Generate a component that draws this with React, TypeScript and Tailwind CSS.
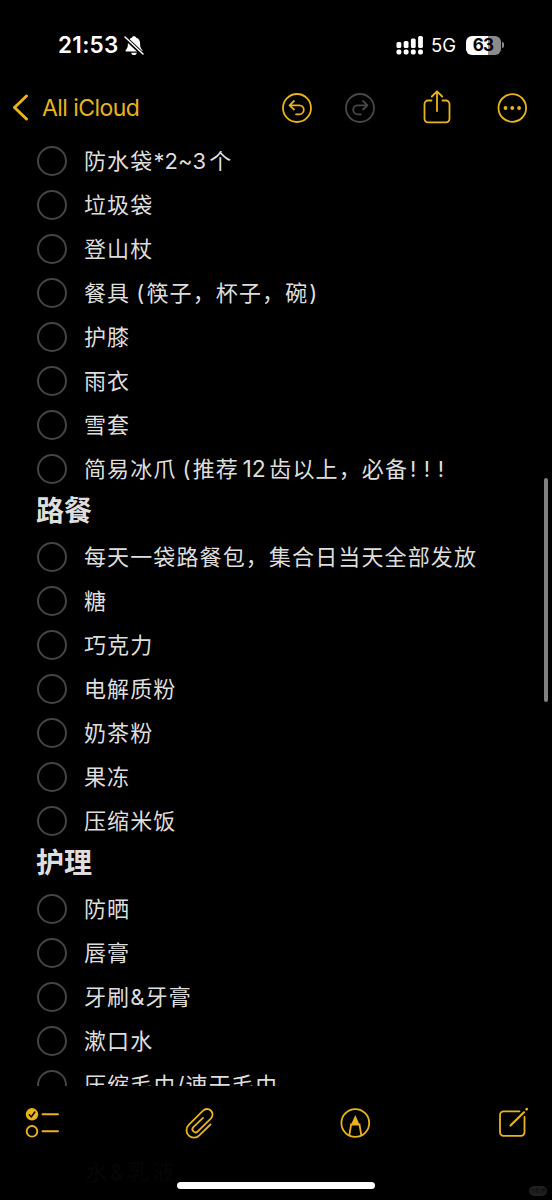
import type { ReactNode } from "react";

type Section = { title?: string; items: ReactNode[] };

const sections: Section[] = [
  {
    items: [
      <>
        防水袋<span className="tracking-[0.1px]">*2~3</span>
        <span className="ml-[3px]">个</span>
      </>,
      "垃圾袋",
      "登山杖",
      <>
        餐具<span className="mr-px ml-1.5">(</span>筷子，杯子，碗
        <span className="ml-px">)</span>
      </>,
      "护膝",
      "雨衣",
      "雪套",
      <>
        简易冰爪<span className="mr-px ml-1.5">(</span>推荐
        <span className="mx-[3.5px] text-[23px] tracking-normal">12</span>
        齿以上，必备<span className="ml-0.5 tracking-[7.5px]">!!!</span>
      </>,
    ],
  },
  {
    title: "路餐",
    items: [
      "每天一袋路餐包，集合日当天全部发放",
      "糖",
      "巧克力",
      "电解质粉",
      "奶茶粉",
      "果冻",
      "压缩米饭",
    ],
  },
  {
    title: "护理",
    items: ["防晒", "唇膏", "牙刷&牙膏", "漱口水", "压缩毛巾/速干毛巾"],
  },
];

function StatusBar() {
  return (
    <div className="flex h-[66px] items-start justify-between pt-[34px] pr-[48px] pl-[58px] text-white">
      <div className="flex h-[22px] items-center gap-[4px]">
        <span className="w-[62px] text-[22.5px] leading-[22px] font-semibold tracking-[0.3px]">21:53</span>
        <svg width="20" height="21" viewBox="0 0 20 21">
          <path
            d="M10 1.2c1.3 0 2 .7 2.2 1.6 2.5.7 3.9 2.8 3.9 5.7 0 4 .9 5 2.2 6.6.5.7.2 1.3-.6 1.3H2.3c-.8 0-1.1-.6-.6-1.3C3 13.5 3.9 12.5 3.9 8.5c0-2.9 1.4-5 3.9-5.7C8 1.9 8.7 1.2 10 1.2zM7.2 17.7h5.6c-.2 1.5-1.4 2.3-2.8 2.3s-2.6-.8-2.8-2.3z"
            fill="currentColor"
          />
          <path d="M1 2.5l18 17" stroke="#000" strokeWidth="3.8" />
          <path d="M1 2l18 17" stroke="currentColor" strokeWidth="1.5" strokeLinecap="round" />
        </svg>
      </div>
      <div className="flex h-[22px] items-center">
        <svg width="28" height="20" viewBox="0 0 28 20" fill="currentColor">
          <rect x="0.5" y="7" width="4.8" height="6" rx="1.5" />
          <rect x="7.7" y="6" width="4.8" height="7" rx="1.5" />
          <rect x="14.9" y="3.5" width="4.8" height="9.5" rx="1.5" />
          <rect x="22.1" y="1" width="4.8" height="12" rx="1.5" />
          <rect x="0.5" y="14.5" width="4.8" height="5" rx="1.7" />
          <rect x="7.7" y="14.5" width="4.8" height="5" rx="1.7" />
          <rect x="14.9" y="14.5" width="4.8" height="5" rx="1.7" />
          <rect x="22.1" y="14.5" width="4.8" height="5" rx="1.7" />
        </svg>
        <span className="ml-[7px] w-[28px] text-[18.5px] leading-[22px]">5G</span>
        <div className="ml-[7px] flex h-[19px] w-[35px] items-center justify-center rounded-[6px] bg-linear-to-r from-white from-62% to-[#8b8b8b] to-62% pr-px text-[17px] leading-[19px] font-bold tracking-[-0.8px] text-black">
          63
        </div>
        <div className="ml-px h-[6px] w-[2px] rounded-r-full bg-[#8b8b8b]" />
      </div>
    </div>
  );
}

function NavBar() {
  return (
    <div className="flex h-[73px] items-start pt-[24px] pl-3 text-[#e8b31c]">
      <svg className="mt-[4px]" width="17" height="27" viewBox="0 0 17 27" fill="none">
        <path d="M14.5 2L2.5 13.5l12 11.5" stroke="currentColor" strokeWidth="3" strokeLinecap="round" strokeLinejoin="round" />
      </svg>
      <span className="ml-[13px] w-[239px] text-[23px] leading-[36px] tracking-[-0.55px]">All iCloud</span>
      <svg className="mt-[2px]" width="32" height="32" viewBox="0 0 32 32" fill="none" stroke="currentColor" strokeWidth="1.8" strokeLinecap="round" strokeLinejoin="round">
        <circle cx="16" cy="16" r="14" />
        <path d="M13 9l-4.5 4.3L13 17.5M9 13.3h9.3a4.5 4.5 0 0 1 0 9H15" />
      </svg>
      <svg className="mt-[2px] ml-[31px] text-[#48484a]" width="32" height="32" viewBox="0 0 32 32" fill="none" stroke="currentColor" strokeWidth="1.8" strokeLinecap="round" strokeLinejoin="round">
        <circle cx="16" cy="16" r="14" />
        <path d="M19 9l4.500 4.3-4.500 4.2M23 13.3h-9.3a4.5 4.5 0 0 0 0 9H17" />
      </svg>
      <svg className="ml-[46px]" width="30" height="35" viewBox="0 0 30 35" fill="none" stroke="currentColor" strokeWidth="1.8" strokeLinecap="round" strokeLinejoin="round">
        <path d="M9.5 10.5H6A3.5 3.5 0 0 0 2.5 14v14.8a3.5 3.5 0 0 0 3.5 3.5h18a3.5 3.5 0 0 0 3.5-3.5V14a3.5 3.5 0 0 0-3.5-3.5h-3.5M15 21V1.5M9.8 6.5L15 1.3l5.2 5.2" />
      </svg>
      <svg className="mt-[2px] ml-[44px]" width="32" height="32" viewBox="0 0 32 32" fill="none">
        <circle cx="16.300" cy="16" r="13.8" stroke="currentColor" strokeWidth="1.8" />
        <circle cx="9.500" cy="16" r="1.9" fill="currentColor" />
        <circle cx="16.300" cy="16" r="1.9" fill="currentColor" />
        <circle cx="23.100" cy="16" r="1.9" fill="currentColor" />
      </svg>
    </div>
  );
}

function Toolbar() {
  return (
    <div className="flex h-[86px] items-start bg-black pt-[20px] pl-[25px] text-[#e8b31c]">
      <svg width="34" height="34" viewBox="0 0 34 34" fill="none" stroke="currentColor" strokeWidth="1.9" strokeLinecap="round">
        <circle cx="7" cy="8.3" r="6.2" fill="currentColor" stroke="none" />
        <path d="M4.3 8.8L6.3 11l3.5-5" stroke="#000" strokeWidth="1.4" />
        <circle cx="7" cy="25.3" r="5.3" />
        <path d="M17.5 8.3H33M17.5 25.3H33" />
      </svg>
      <svg className="ml-[124px]" width="32" height="34" viewBox="0 0 32 34" fill="none" stroke="currentColor" strokeWidth="1.8" strokeLinecap="round" strokeLinejoin="round">
        <path d="M27.500 18.500L16.300 29.300A7.300 7.300 0 0 1 5.500 19.200L20 4.700a5.500 5.500 0 0 1 8 7.600L14.800 25.300a3 3 0 0 1-4.500-4.200L20 11.800" />
      </svg>
      <svg className="ml-[124px]" width="32" height="32" viewBox="0 0 32 32" fill="none" stroke="currentColor" strokeWidth="1.8">
        <circle cx="16.3" cy="17" r="13.9" />
        <path d="M10.3 29.3L12.100 18.500h8.400L22.300 29.300" />
        <path d="M16.300 9l4.200 9.500h-8.400z" fill="currentColor" stroke="none" />
      </svg>
      <svg className="ml-[127px]" width="31" height="34" viewBox="0 0 31 34" fill="none" stroke="currentColor" strokeWidth="1.8" strokeLinecap="round">
        <path d="M21.5 5.3H5.5A3.5 3.5 0 0 0 2 8.8v17.5a3.5 3.5 0 0 0 3.5 3.5H23a3.5 3.5 0 0 0 3.5-3.5V10.800" />
        <path d="M12.5 19.5L26 6.3" strokeWidth="2.2" />
        <path d="M28.5 3.3l.3-.3" strokeWidth="2.5" />
      </svg>
    </div>
  );
}

export default function App() {
  return (
    <div className="relative flex h-[1200px] w-[552px] flex-col overflow-hidden bg-black font-[Inter,'Noto_Sans_CJK_SC',sans-serif]">
      <StatusBar />
      <NavBar />
      <main className="h-[947px] overflow-hidden text-[22px] tracking-[1.12px] text-[#dedede]">
        {sections.map((section, i) => (
          <section key={i}>
            {section.title && (
              <h2 className="h-[44.5px] pl-9 text-[28px] leading-[41px] font-bold tracking-normal">
                {section.title}
              </h2>
            )}
            <ul>
              {section.items.map((item, j) => (
                <li key={j} className="flex h-[43.95px] items-center pl-[37px]">
                  <span className="size-[30px] shrink-0 rounded-full border-2 border-[#454545]" />
                  <span className="ml-[17px] leading-[44px] whitespace-nowrap">{item}</span>
                </li>
              ))}
            </ul>
          </section>
        ))}
      </main>
      <Toolbar />
      <div className="mt-[10px] ml-[177px] h-[7px] w-[198px] rounded-full bg-white" />
      {/* next row, barely showing through the toolbar */}
      <div className="absolute top-[1156px] left-[85px] text-[22px] leading-[32px] tracking-[3px] text-[#060606]">
        水&乳液
      </div>
      <div className="absolute top-[478px] right-[4px] h-[224px] w-[4px] rounded-full bg-[#808080]" />
      <div className="absolute right-[5px] bottom-[4px] flex h-[10px] w-[18px] items-center justify-center rounded-full bg-[#202020] text-[5px] text-black">
        小红书
      </div>
    </div>
  );
}
